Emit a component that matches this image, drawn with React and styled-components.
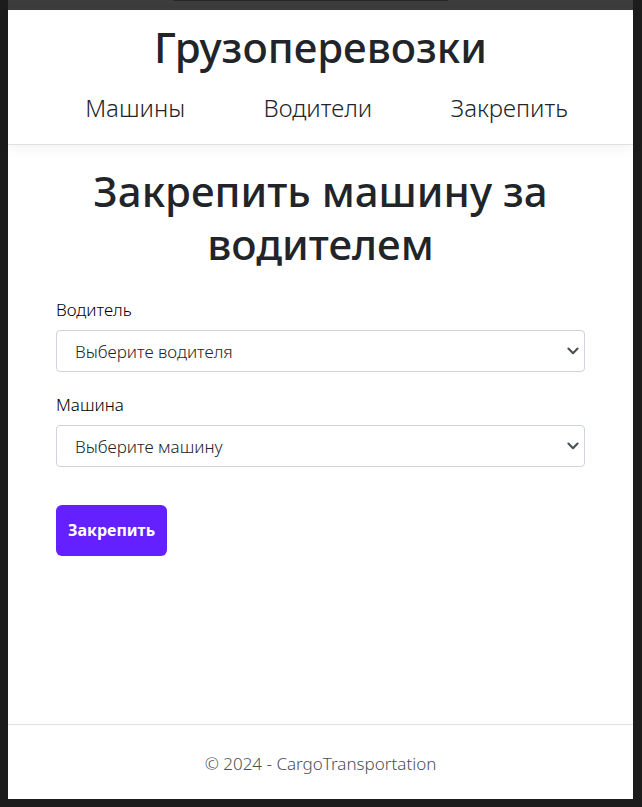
import React from "react";
import styled, { createGlobalStyle } from "styled-components";

const GlobalStyle = createGlobalStyle`
  *, *::before, *::after { box-sizing: border-box; }
  body {
    margin: 0;
    background: #1c1c1c;
    color: #212529;
    font-family: "Segoe UI", "Noto Sans", "Open Sans", sans-serif;
    font-size: 17px;
    font-weight: 300;
    line-height: 25px;
  }
`;

const Window = styled.div`
  display: flex;
  flex-direction: column;
  min-height: 100vh;
  background: #1c1c1c;
`;

const TopBar = styled.div`
  display: flex;
  justify-content: center;
  flex: none;
  height: 10px;
  margin: 0 9px 0 8px;
  background: #3c3c3c;
`;

const AddressEdge = styled.div`
  width: 44%;
  height: 1px;
  margin-right: 20px;
  border-radius: 0 0 4px 4px;
  background: #262626;
`;

const Page = styled.div`
  display: flex;
  flex-direction: column;
  flex: 1;
  margin: 0 9px 8px 8px;
  background: #fff;
`;

const Header = styled.header`
  padding: 10px 26px 12px;
  border-bottom: 1px solid #dee2e6;
  box-shadow: 0 4px 12px rgba(0, 0, 0, 0.05);
`;

const Title = styled.h1`
  margin: 0;
  font-size: 42px;
  font-weight: 500;
  line-height: 53px;
  text-align: center;
`;

const Nav = styled.nav`
  display: flex;
  justify-content: space-around;
  margin-top: 11px;
  padding-left: 12px;
`;

const NavLink = styled.a`
  padding: 6px 0;
  color: #212529;
  font-size: 24px;
  line-height: 36px;
  text-decoration: none;
`;

const Main = styled.main`
  flex: 1;
  padding: 19px 48px;
`;

const Form = styled.form`
  margin-top: 27px;
`;

const Field = styled.div`
  display: flex;
  flex-direction: column;
  gap: 8px;
  margin-bottom: 20px;
`;

const Label = styled.label`
  color: #000;
`;

const SelectBox = styled.div`
  display: grid;
  align-items: center;

  > * { grid-area: 1 / 1; }

  > svg {
    justify-self: end;
    margin-right: 5px;
    pointer-events: none;
  }
`;

const Select = styled.select`
  appearance: none;
  width: 100%;
  height: 42px;
  padding: 1px 36px 0 18px;
  border: 1px solid #ced4da;
  border-radius: 4px;
  background: #fff;
  color: #212529;
  font: inherit;
`;

const SubmitButton = styled.button`
  margin-top: 18px;
  padding: 13px 12px;
  border: 0;
  border-radius: 6px;
  background: #6420ff;
  color: #fff;
  font: inherit;
  font-size: 16px;
  font-weight: 700;
  line-height: 25px;
  cursor: pointer;
`;

const Footer = styled.footer`
  padding: 26px 16px 23px;
  border-top: 1px solid #dee2e6;
  color: #495057;
  text-align: center;
`;

function SelectField({ id, label, placeholder }) {
  return (
    <Field>
      <Label htmlFor={id}>{label}</Label>
      <SelectBox>
        <Select id={id} name={id} defaultValue="">
          <option value="">{placeholder}</option>
        </Select>
        <svg width="14" height="14" viewBox="0 0 14 14" aria-hidden="true">
          <path d="M2.4 4.6 7 9.2l4.6-4.6" fill="none" stroke="#495057" strokeWidth="2.1" strokeLinecap="round" strokeLinejoin="round" />
        </svg>
      </SelectBox>
    </Field>
  );
}

export default function App() {
  return (
    <Window>
      <GlobalStyle />
      <TopBar>
        <AddressEdge />
      </TopBar>
      <Page>
        <Header>
          <Title>Грузоперевозки</Title>
          <Nav>
            <NavLink href="#cars">Машины</NavLink>
            <NavLink href="#drivers">Водители</NavLink>
            <NavLink href="#assign">Закрепить</NavLink>
          </Nav>
        </Header>
        <Main>
          <Title as="h2">Закрепить машину за водителем</Title>
          <Form onSubmit={(event) => event.preventDefault()}>
            <SelectField id="driver" label="Водитель" placeholder="Выберите водителя" />
            <SelectField id="car" label="Машина" placeholder="Выберите машину" />
            <SubmitButton type="submit">Закрепить</SubmitButton>
          </Form>
        </Main>
        <Footer>© 2024 - CargoTransportation</Footer>
      </Page>
    </Window>
  );
}
